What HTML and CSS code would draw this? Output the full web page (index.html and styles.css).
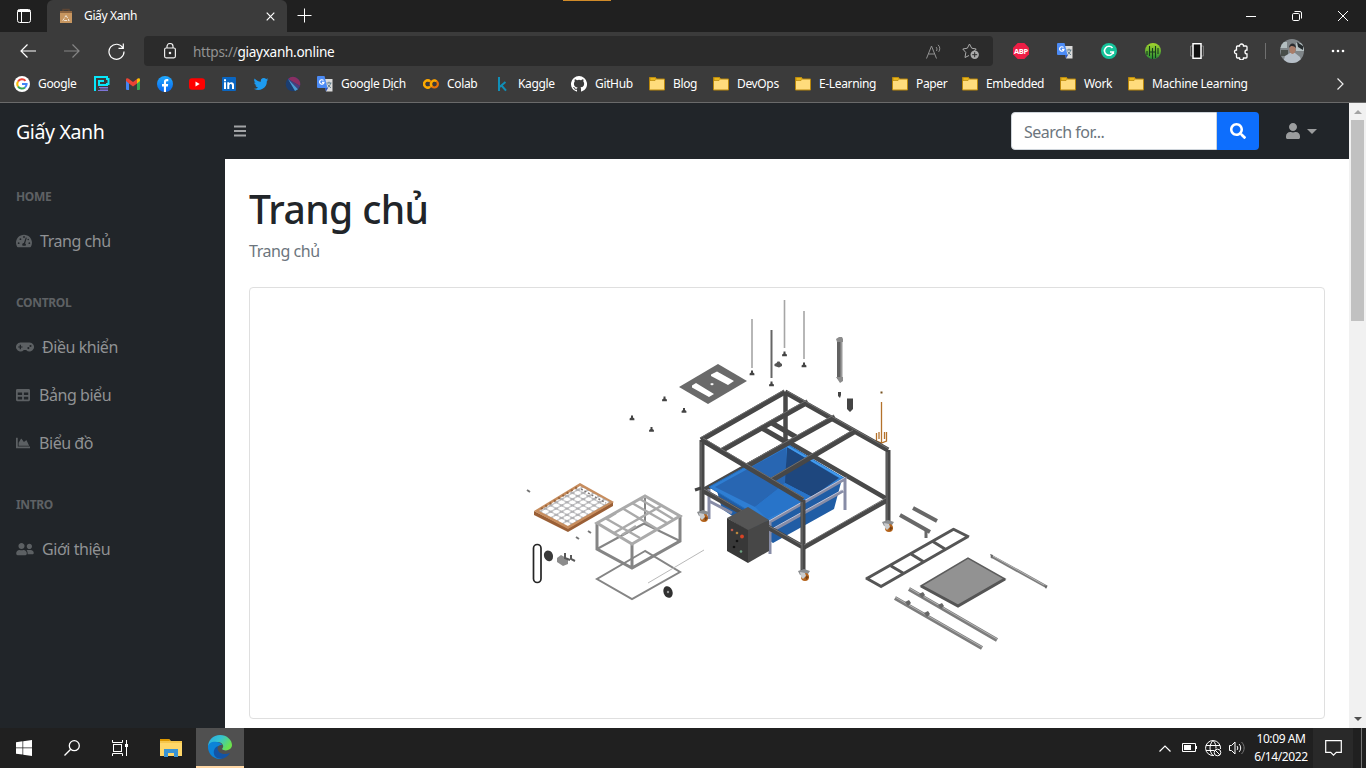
FILE: index.html
```html
<!DOCTYPE html>
<html lang="vi">
<head>
<meta charset="utf-8">
<title>Giấy Xanh</title>
<link rel="stylesheet" href="styles.css">
</head>
<body>
<svg class="defs" width="0" height="0">
  <defs>
    <symbol id="folder" viewBox="0 0 16 16"><path d="M.5 2.500v-1h6l1 1.500h8v11h-15z" fill="#ffdc7c" stroke="#b8860b"/><path d="M1 1.500h5.300l.9 1.700L6 4.500H1z" fill="#e9b61c" stroke="#b8860b" stroke-width=".7"/></symbol>
    <symbol id="translate" viewBox="0 0 16 16"><path d="M7 3h8.500v12.500H9z" fill="#dcdcdc"/><path d="M9.500 7h5M12 5.700V7m1.700 0c-.5 2-1.900 4-3.500 5m.5-3.500c.8 1.500 2 2.500 3.300 3.300" fill="none" stroke="#607d8b"/><path d="M1 0h6.500l3 12H1a1 1 0 0 1-1-1V1a1 1 0 0 1 1-1z" fill="#4c8bf5"/><path d="M8 12h3l-2 3.500z" fill="#3057c0"/><path d="M6.500 4.500A2.200 2.200 0 1 0 7 6.300H5" fill="none" stroke="#fff" stroke-width="1.200"/></symbol>
    <symbol id="caster" viewBox="0 0 14 14"><path d="M1 3l6-2 6 2-2 3-8 1z" fill="#8a8d90"/><circle cx="8" cy="9" r="4" fill="#b5651d"/><path d="M8 7l4 2-3 3z" fill="#7d4212"/><path d="M3 4l5 1 1 3-3 3-2-2z" fill="#c9cbcd"/></symbol>
    <symbol id="foot" viewBox="0 0 6 6"><path d="M2 .5h2v2l1.400 1v1.700H.6V3.500L2 2.500z" fill="#444"/></symbol>
    <pattern id="holes" width="6" height="6" patternUnits="userSpaceOnUse" patternTransform="matrix(.9 -.52 .9 .52 0 0)"><rect width="6" height="6" fill="#b0b0b3"/><circle cx="3" cy="3" r="2.600" fill="#fff"/></pattern>
    <linearGradient id="edgeA" x1="0" y1="0" x2="1" y2=".5"><stop stop-color="#28a9e5"/><stop offset=".5" stop-color="#35c3d0"/><stop offset="1" stop-color="#6be24c"/></linearGradient>
    <linearGradient id="bolt" x1="0" y1="0" x2="0" y2="1"><stop stop-color="#a4d52c"/><stop offset="1" stop-color="#278c36"/></linearGradient>
    <linearGradient id="fb" x1="0" y1="0" x2="0" y2="1"><stop stop-color="#20aaff"/><stop offset="1" stop-color="#0866ee"/></linearGradient>
  </defs>
</svg>
<div class="desktop">
  <header class="tabstrip">
    <div class="tab-menu"><svg width="16" height="16" viewBox="0 0 16 16" fill="none" stroke="#fff"><rect x="1.500" y="1.500" width="13" height="13" rx="2"/><path d="M2 3h12" stroke-width="2"/><path d="M5.500 4v10.500"/></svg></div>
    <div class="tab">
      <svg width="14" height="16" viewBox="0 0 14 16"><path d="M4 4V1.500h6V4" fill="none" stroke="#5d4634" stroke-width="1.500"/><path d="M1 3h12v12H1z" fill="#c79660"/><path d="M1 3h12v2H1z" fill="#8d6540"/><path d="M7 7.500l3.200 5H3.800z" fill="none" stroke="#efe4d6" stroke-dasharray="3 1"/></svg>
      <span class="tab-title">Giấy Xanh</span>
      <svg width="9" height="9" viewBox="0 0 9 9" stroke="#fff" stroke-width="1.200"><path d="M.7.7l7.600 7.600M8.300.7L.7 8.300"/></svg>
    </div>
    <svg class="new-tab" width="15" height="15" viewBox="0 0 15 15" stroke="#fff"><path d="M7.500.5v14M.5 7.500h14"/></svg>
    <div class="accent"></div>
    <div class="window-controls">
      <span><svg width="10" height="10" stroke="#fff"><path d="M0 5.500h10"/></svg></span>
      <span><svg width="10" height="10" viewBox="0 0 10 10" fill="none" stroke="#fff"><rect x=".5" y="2.500" width="7" height="7" rx="1.200"/><path d="M2.500.5H8A1.500 1.500 0 0 1 9.500 2v5.500"/></svg></span>
      <span><svg width="10" height="10" viewBox="0 0 10 10" stroke="#fff"><path d="M0 0l10 10M10 0L0 10"/></svg></span>
    </div>
  </header>
  <div class="toolbar">
    <div class="nav-buttons">
      <span><svg width="16" height="14" viewBox="0 0 16 14" fill="none" stroke="#fff" stroke-width="1.200"><path d="M16 7H1M7.500.5L1 7l6.500 6.500"/></svg></span>
      <span><svg width="16" height="14" viewBox="0 0 16 14" fill="none" stroke="#858585" stroke-width="1.200"><path d="M0 7h15M8.500.5L15 7l-6.500 6.500"/></svg></span>
      <span><svg width="17" height="17" viewBox="0 0 17 17" fill="none" stroke="#fff" stroke-width="1.200"><path d="M15 5A7.500 7.500 0 1 0 16 8.500M15.300.5v4.800h-4.800"/></svg></span>
    </div>
    <div class="address">
      <svg width="12" height="16" viewBox="0 0 12 16" fill="none" stroke="#eee" stroke-width="1.200"><rect x=".6" y="5" width="10.800" height="9.800" rx="1.500"/><path d="M3 5V3.500a3 3 0 0 1 6 0V5"/><circle cx="6" cy="10" r=".7" fill="#fff"/></svg>
      <span class="url"><span>https://</span>giayxanh.online</span>
      <svg class="read" width="17" height="15" viewBox="0 0 17 15" fill="none" stroke="#929292"><path d="M.5 14.500L5.500 2l5 12.500M2.500 10h6M10 3c1.200 1 1.200 2.700.5 4M12 .8c2.200 1.800 2.200 5 .7 7"/></svg>
      <svg width="18" height="17" viewBox="0 0 18 17" fill="none" stroke="#aaa"><path d="M7 12.500l-4 2 .8-5L.8 6l4.500-.8L7.500 1l2.200 4.200 4.500.8-2 2.200"/><circle cx="12.700" cy="11.700" r="4.200" fill="#aaa" stroke="none"/><path d="M10.200 11.700h5M12.700 9.200v5" stroke="#2b2b2b"/></svg>
    </div>
    <div class="extensions">
      <span><svg width="16" height="16" viewBox="0 0 16 16"><path d="M4.700 0h6.600L16 4.700v6.600L11.300 16H4.700L0 11.300V4.700z" fill="#ed1e45"/><text x="8" y="10.800" text-anchor="middle" class="abp">ABP</text></svg></span>
      <span><svg width="16" height="16"><use href="#translate"/></svg></span>
      <span><svg width="16" height="16" viewBox="0 0 16 16"><circle cx="8" cy="8" r="8" fill="#15c39a"/><path d="M11.500 5A4.500 4.500 0 1 0 12.300 9H9M12.300 9v2" fill="none" stroke="#fff" stroke-width="1.600"/></svg></span>
      <span><svg width="16" height="16" viewBox="0 0 16 16"><circle cx="8" cy="8" r="8" fill="url(#bolt)"/><path d="M4.500 3v10M7.500 5v11M10.500 3v12M2 8v4M13 5v6M5 9h2M8 9h2" stroke="#16391e" stroke-width="1.100"/></svg></span>
      <span><svg width="14" height="16" viewBox="0 0 14 16"><path d="M3 3H.5v10H3m8-10h2.500v10H11" fill="none" stroke="#777"/><rect x="3" y=".7" width="8" height="14.600" fill="#111" stroke="#fff" stroke-width="1.500"/></svg></span>
      <span><svg width="16" height="17" viewBox="0 0 16 17" fill="none" stroke="#fff" stroke-width="1.300"><path d="M4.500 3h2a2 2 0 0 1 4 0H13a1 1 0 0 1 1 1v3a2 2 0 0 0 0 4v3a1 1 0 0 1-1 1h-2.500a2 2 0 0 1-4 0h-2a1 1 0 0 1-1-1v-3a2 2 0 0 1 0-4V4a1 1 0 0 1 1-1z"/></svg></span>
    </div>
    <div class="divider"></div>
    <svg class="avatar" width="24" height="24" viewBox="0 0 24 24"><clipPath id="round"><circle cx="12" cy="12" r="12"/></clipPath><g clip-path="url(#round)"><path fill="#7f8588" d="M0 0h24v24H0z"/><path fill="#b4bfc1" d="M0 3h7v6H0zM16 4h8v8h-8z"/><path d="M17 3l6 4v4l-5-3z" fill="#252b2d"/><path d="M1 11h7v6H1z" fill="#484d49"/><path d="M3 24l2-7 5-3h5l5 4 2 6z" fill="#b7bfc8"/><ellipse cx="12.500" cy="10" rx="3.200" ry="5" fill="#aa7d69"/><path d="M9 9c0-6 7-6 7 0-2-2-5-3-7 0z" fill="#292b2e"/></g></svg>
    <svg class="more" width="14" height="4" fill="#fff"><circle cx="2" cy="2" r="1.300"/><circle cx="7" cy="2" r="1.300"/><circle cx="12" cy="2" r="1.300"/></svg>
  </div>
  <nav class="bookmarks">
    <a><svg width="16" height="16" viewBox="0 0 16 16"><circle cx="8" cy="8" r="8" fill="#fff"/><g fill="none" stroke-width="2"><path d="M4 5.500a4.700 4.700 0 0 1 7.500-.7" stroke="#ea4335"/><path d="M4 5.500a4.700 4.700 0 0 0 0 5" stroke="#fbbc05"/><path d="M4 10.500a4.700 4.700 0 0 0 7 .9" stroke="#34a853"/><path d="M11 11.400A4.600 4.600 0 0 0 12.600 8H8" stroke="#4285f4"/></g></svg>Google</a>
    <a><svg width="16" height="16" viewBox="0 0 16 16" fill="none"><path d="M1 15V1h12v2h1.500v5H13v1H5V5h5" stroke="#08e7fa" stroke-width="2"/><path d="M5 11.500h9M4 14.500h10M6 13h8" stroke="#7d75d8" stroke-width="1.200"/></svg></a>
    <a><svg width="16" height="16" viewBox="0 0 16 16"><path d="M1 4l3 2v8H2a1 1 0 0 1-1-1z" fill="#4285f4"/><path d="M15 4l-3 2v8h2a1 1 0 0 0 1-1z" fill="#34a853"/><path d="M1 5V3.500C1 2 3 2 4 3l4 3 4-3v4.500L8 10.500 4 7.500z" fill="#ea4335"/><path d="M12 3c1-1 3-1 3 .5V5l-3 2.500z" fill="#fbbc04"/></svg></a>
    <a><svg width="16" height="16" viewBox="0 0 16 16"><circle cx="8" cy="8" r="8" fill="url(#fb)"/><path d="M6.900 16v-5.500H5V8h1.900V6.300C6.900 4 8 3 10 3l1.300.1v2.100h-1c-1 0-1.300.5-1.300 1.200V8h2.200l-.4 2.500H9V16z" fill="#fff"/></svg></a>
    <a><svg width="16" height="16" viewBox="0 0 16 16"><rect y="2.200" width="16" height="11.600" rx="3" fill="#f00"/><path d="M6.500 5.500v5l4.200-2.500z" fill="#fff"/></svg></a>
    <a><svg width="16" height="16" viewBox="0 0 16 16"><rect x="1" y="1" width="14" height="14" rx="1" fill="#0a66c2"/><path d="M3 6.300h2V13H3zM3 3.200h2v2H3zM6.300 6.300h2v1c1.200-1.900 4.700-1.500 4.700 1.500V13h-2V9.500c0-2.200-2.700-2-2.700 0V13h-2z" fill="#fff"/></svg></a>
    <a><svg width="16" height="16" viewBox="-1 -1 26 26"><path d="M23.900 4.600c-.9.400-1.800.7-2.800.8a5 5 0 0 0 2.200-2.700c-1 .6-2 1-3.100 1.200a4.900 4.900 0 0 0-8.400 4.500C7.700 8.200 4.100 6.200 1.700 3.200a4.900 4.900 0 0 0 1.500 6.600c-.8 0-1.600-.2-2.200-.6a5 5 0 0 0 3.900 4.900c-.7.200-1.500.2-2.200.1.600 2 2.400 3.400 4.600 3.400A9.900 9.900 0 0 1 0 19.500 14 14 0 0 0 21.500 7c1-.7 1.800-1.500 2.400-2.400z" fill="#1d9bf0"/></svg></a>
    <a><svg width="16" height="16" viewBox="0 0 16 16"><circle cx="8" cy="8" r="7.300" fill="#1b3d70"/><path d="M3 3a7.300 7.300 0 0 1 8-1.600 7.300 7.300 0 0 1 4 8.600z" fill="#8a2f62"/><path d="M3 3l12 7-2 3.300z" fill="#49407c"/><path d="M3 3l10 10.300-3 1.700z" fill="#4b9bd0"/></svg></a>
    <a><svg width="16" height="16"><use href="#translate"/></svg>Google Dịch</a>
    <a><svg width="16" height="16" viewBox="0 0 16 16" fill="none" stroke-width="2.200"><circle cx="4.700" cy="8" r="3.600" stroke="#e8710a"/><circle cx="11.400" cy="8" r="3.500" stroke="#e8710a"/><path d="M7 5.200A3.600 3.600 0 1 0 7 10.800M8.900 10.500a3.500 3.500 0 0 1 4.500-5.300" stroke="#f9ab00"/></svg>Colab</a>
    <a class="kaggle"><svg width="16" height="16" viewBox="0 0 16 16" fill="none" stroke="#108fb8" stroke-width="2"><path d="M4 1v14M10.500 6l-6 5M6.500 9.500l4.500 5.200"/></svg>Kaggle</a>
    <a><svg width="16" height="16" viewBox="0 0 16 16"><path fill="#fff" d="M8 0a8 8 0 0 0-2.530 15.590c.4.070.55-.17.55-.38v-1.490c-2.010.37-2.530-.49-2.690-.94-.09-.23-.48-.94-.82-1.130-.28-.15-.68-.52-.01-.53.63-.01 1.080.58 1.230.82.720 1.210 1.870.87 2.330.66.070-.52.280-.87.510-1.070-1.780-.2-3.640-.89-3.640-3.950 0-.87.310-1.590.82-2.150-.08-.2-.36-1.020.08-2.120 0 0 .67-.21 2.200.82a7.600 7.600 0 0 1 4 0c1.530-1.040 2.200-.82 2.200-.82.44 1.100.16 1.920.08 2.120.51.56.82 1.270.82 2.150 0 3.070-1.870 3.750-3.650 3.950.29.250.54.730.54 1.480v2.200c0 .21.150.46.550.38A8 8 0 0 0 8 0z"/></svg>GitHub</a>
    <a><svg width="16" height="16"><use href="#folder"/></svg>Blog</a>
    <a><svg width="16" height="16"><use href="#folder"/></svg>DevOps</a>
    <a><svg width="16" height="16"><use href="#folder"/></svg>E-Learning</a>
    <a><svg width="16" height="16"><use href="#folder"/></svg>Paper</a>
    <a><svg width="16" height="16"><use href="#folder"/></svg>Embedded</a>
    <a><svg width="16" height="16"><use href="#folder"/></svg>Work</a>
    <a><svg width="16" height="16"><use href="#folder"/></svg>Machine Learning</a>
    <svg width="7" height="12" fill="none" stroke="#eee" stroke-width="1.200"><path d="M.5.5L6 6 .5 11.500"/></svg>
  </nav>

  <div class="page">
    <aside class="sidebar">
      <div class="brand">Giấy Xanh</div>
      <h6>HOME</h6>
      <a><svg width="16" height="14" viewBox="0 32 576 448"><path d="M288 32C129 32 0 161 0 320c0 52.800 14.300 102.300 39 144.800 5.600 9.600 16.300 15.200 27.500 15.200h443c11.100 0 21.800-5.600 27.400-15.200C561.800 422.300 576 372.800 576 320c0-159-129-288-288-288z"/><g fill="#212529"><circle cx="288" cy="112" r="32"/><circle cx="96" cy="336" r="32"/><circle cx="160" cy="192" r="32"/><circle cx="480" cy="336" r="32"/><circle cx="440" cy="200" r="28"/><path d="M352 130l38 13-62 200c37 22 40 55 12 82H236c-30-48 2-94 48-96z"/></g></svg><span>Trang chủ</span></a>
      <h6>CONTROL</h6>
      <a><svg width="18" height="14" viewBox="0 32 640 448"><path d="M480 96H160a160 160 0 1 0 119 267h82A160 160 0 1 0 480 96z"/><path d="M132 180h44v55h54v42h-54v55h-44v-55H78v-42h54z" fill="#212529"/><circle cx="440" cy="295" r="38" fill="#212529"/><circle cx="515" cy="220" r="38" fill="#212529"/></svg><span>Điều khiển</span></a>
      <a><svg width="14" height="14" viewBox="0 0 512 512"><path fill-rule="evenodd" d="M464 32H48C21 32 0 53 0 80v352c0 27 21 48 48 48h416c27 0 48-21 48-48V80c0-27-21-48-48-48zM224 416H64v-96h160zm0-160H64v-96h160zm224 160H288v-96h160zm0-160H288v-96h160z"/></svg><span class="nudge">Bảng biểu</span></a>
      <a><svg width="14" height="14" viewBox="0 0 512 512"><path d="M500 384c6.600 0 12 5.400 12 12v40c0 6.600-5.400 12-12 12H12c-6.600 0-12-5.400-12-12V76c0-6.600 5.400-12 12-12h40c6.600 0 12 5.400 12 12v308zM372.700 159.500L288 216l-85.300-113.700c-5.100-6.800-15.500-6.300-19.900 1L96 248v104h384l-89.900-187.800c-3.200-6.500-11.400-8.700-17.400-4.700z"/></svg><span class="nudge">Biểu đồ</span></a>
      <h6>INTRO</h6>
      <a><svg width="18" height="14" viewBox="0 0 640 512"><path d="M192 256c61.900 0 112-50.100 112-112S253.900 32 192 32 80 82.100 80 144s50.100 112 112 112zm76.800 32h-8.300c-20.800 10-43.900 16-68.500 16s-47.600-6-68.500-16h-8.300C51.600 288 0 339.600 0 403.200V432c0 26.500 21.500 48 48 48h288c26.500 0 48-21.500 48-48v-28.800c0-63.600-51.600-115.200-115.200-115.200zM480 256c53 0 96-43 96-96s-43-96-96-96-96 43-96 96 43 96 96 96zm48 32h-3.800c-13.900 4.800-28.600 8-44.200 8s-30.300-3.200-44.200-8H432c-20.400 0-39.200 5.900-55.700 15.400 24.400 26.300 39.700 61.200 39.700 99.800v38.400c0 2.200-.5 4.300-.6 6.400H592c26.500 0 48-21.500 48-48 0-61.900-50.100-112-112-112z"/></svg><span>Giới thiệu</span></a>
    </aside>
    <div class="content">
      <div class="topnav">
        <svg width="12" height="12" stroke="#a2a4a6" stroke-width="2"><path d="M0 1.500h12M0 6h12M0 10.500h12"/></svg>
        <div class="search"><div class="field">Search for...</div><button><svg width="16" height="16" viewBox="0 0 512 512" fill="#fff"><path d="M505 442.700L405.300 343c-4.500-4.500-10.600-7-17-7H372c27.600-35.300 44-79.700 44-128C416 93.100 322.900 0 208 0S0 93.100 0 208s93.100 208 208 208c48.300 0 92.700-16.400 128-44v16.300c0 6.400 2.500 12.500 7 17l99.700 99.700c9.400 9.400 24.600 9.400 33.900 0l28.300-28.300c9.400-9.400 9.400-24.600.1-34zM208 336c-70.700 0-128-57.200-128-128 0-70.700 57.200-128 128-128 70.700 0 128 57.200 128 128 0 70.700-57.200 128-128 128z"/></svg></button></div>
        <svg width="14" height="16" viewBox="0 0 448 512" fill="#9b9d9e"><path d="M224 256c70.700 0 128-57.300 128-128S294.700 0 224 0 96 57.300 96 128s57.300 128 128 128zm89.600 32h-16.700c-22.200 10.200-46.900 16-72.900 16s-50.600-5.800-72.900-16h-16.700C60.200 288 0 348.200 0 422.400V464c0 26.500 21.500 48 48 48h352c26.500 0 48-21.500 48-48v-41.600c0-74.200-60.200-134.400-134.400-134.400z"/></svg>
        <i class="caret"></i>
      </div>
      <main>
        <h1>Trang chủ</h1>
        <div class="breadcrumb">Trang chủ</div>
        <div class="card">
          <svg width="1074" height="430" viewBox="250 288 1074 430">
            <!-- threaded rods and feet -->
            <g stroke="#a6a6a6" stroke-width="1.600"><path d="M752 319v49M784.500 300v48M804 311v48"/><path d="M771.500 330v48" stroke="#666" stroke-width="2"/></g>
            <g><use href="#foot" x="749" y="370" width="6" height="6"/><use href="#foot" x="781.500" y="351" width="6" height="6"/><use href="#foot" x="801" y="362" width="6" height="6"/><use href="#foot" x="768.500" y="381" width="6" height="6"/><use href="#foot" x="629" y="415" width="6" height="6"/><use href="#foot" x="648.500" y="426.500" width="6" height="6"/><use href="#foot" x="661.500" y="396" width="6" height="6"/><use href="#foot" x="681" y="407.500" width="6" height="6"/></g>
            <path d="M774.500 364l2-1 1-1.500h2l1 1.500 1.500 1v2l-3 1.500-4.500-1.500z" fill="#555"/>
            <!-- mounting plate -->
            <path fill="#6a6a6a" d="M679 387l39-23 29 17-39 23z"/><path fill="#fff" d="M692 385.500l4-2.500 18 11-5 3-17-9.500zM711 374.500l6-3 17 9.500-6 4-17-9zM710 384l2-1 2 1-2 1.500z"/>
            <!-- actuator, motor and stirrer -->
            <path d="M839 340v39" stroke="#626262" stroke-width="4"/><path d="M841.500 340v39" stroke="#999" stroke-width="2"/><path d="M836 339l3-2h3l1 2v3h-6zM836 377h7v4l-3 2z" fill="#8b8b8b"/><path d="M838 392h3v3l-1 3-2-2zM847 398.500h6V409l-3 3-3-3z" fill="#444"/>
            <g fill="none" stroke="#b4722b" stroke-width="1.300"><path d="M881.500 402v41M876.500 433v8l5 2 5-2v-9M879 432v7M884.500 432v7"/><path d="M880.500 392.500h2" stroke="#76501e" stroke-width="2"/></g>
            <!-- rear frame -->
            <g fill="none" stroke="#494949" stroke-width="4.500"><path d="M785.500 392v52l-82 46M785 440l102 59M886 501l-83 47"/></g>
            <!-- tub -->
            <path fill="#205da5" d="M717 491l51 30 74-42-8 30-61 34-20-13-31-21z"/>
            <path fill="#2e7ed3" stroke="#246dbb" d="M709 487l78-43 57 34-77 44z"/>
            <path fill="#2866b2" d="M715 487l71-39v35l-31 24z"/>
            <path fill="#1e477e" d="M787 447l52 31-27 19-27-14z"/>
            <path fill="#2874c9" d="M785 483l27 14-45 22-12-12z"/>
            <path d="M787 446l55 32" stroke="#429bee" stroke-width="2"/>
            <g fill="none" stroke="#878ca6" stroke-width="3"><path d="M709 489v30M709 493l20 11M709 501l23 12M768 523l77-44v31M770 532l73-41M770 523v31"/><path d="M769 521l75-43M770 530l72-40" stroke="#c0c4d7" stroke-width="1"/></g>
            <!-- front frame -->
            <g fill="none" stroke="#474747" stroke-width="5"><path d="M702 440v72M702 490l101 57M803 500v71M888 450v72M701 440l84-48M785 392l103 58M702 440l101 60M721 451l87-49M747 466l88-49M772 480l82-48M760 427l26 15M770 422l26 15"/></g>
            <g fill="none" stroke="#707070" stroke-width="1"><path d="M700 438l84-48M787 391l102 58M703 438l101 60M720 449l87-49M746 464l88-49M771 478l82-48M701 442v68M802 502v67M887 452v69M704 489l98 56M804 545l82-47"/></g>
            <path d="M695 490l6-2" stroke="#444" stroke-width="3"/>
            <!-- control box -->
            <path fill="#555" d="M727 518l21-11 21 13-21 11z"/><path fill="#383838" d="M727 518l21 12v33l-21-12z"/><path fill="#474747" d="M748 530l21-10v31l-21 12z"/>
            <g><circle cx="732" cy="530" r="1.300" fill="#c25b4a"/><circle cx="737" cy="533" r="1.300" fill="#b9863d"/><circle cx="742" cy="536.500" r="1.900" fill="#d74325"/><circle cx="737" cy="541" r="1.300" fill="#111"/><circle cx="734" cy="547" r="1.300" fill="#111"/><circle cx="741" cy="551.500" r="1.300" fill="#6b9e7f"/></g>
            <use href="#caster" x="696" y="509" width="14" height="14"/><use href="#caster" x="881" y="519" width="14" height="14"/><use href="#caster" x="797" y="568" width="14" height="14"/>
            <!-- sieve tray -->
            <path fill="#9a5f36" d="M534 511l34 17 45-26v4l-45 26-34-17z"/><path fill="#c78d5e" d="M534 511l46-28 34 19-46 27z"/><path fill="url(#holes)" d="M539 511l41-25 30 16-42 24z"/><path d="M541 509l38-23" stroke="#98663e" stroke-width="2" stroke-dasharray="2 3"/><path d="M581 489l25 14" stroke="#7d7777" stroke-width="1.500" stroke-dasharray="2 2"/>
            <!-- inner rack -->
            <g fill="none" stroke="#858585" stroke-width="3"><path d="M597 523v26l35 19 48-27v-26M632 544v24"/><path d="M645 498v26l35 17M597 549l48-26" stroke-width="2"/></g>
            <g fill="none" stroke="#aaa" stroke-width="3"><path d="M597 523l48-27 35 20-48 28z"/><path d="M605 518l35 20M622 508l35 21M632 503l35 20M640 499l33 20M614 533l47-27M608 518l8-5M622 535l14-9" stroke-width="2.400"/></g>
            <path fill="none" stroke="#858585" stroke-width="2" d="M645 551l-48 28 35 20 48-27z"/><path d="M648 583l56-33" stroke="#b9b9b9"/>
            <!-- belt, pulleys and motor -->
            <rect x="533.500" y="544.500" width="7.500" height="38" rx="3.700" fill="none" stroke="#252525" stroke-width="1.700"/><ellipse cx="548.500" cy="556" rx="4.500" ry="5.500" fill="#3a3a3a" transform="rotate(-20 548 556)"/><path fill="#8c8c8c" d="M557 558l4-3 7 4v5l-5 2-6-4z"/><path d="M565 553v5l5 2M571 555v4l4 2" fill="none" stroke="#595959" stroke-width="2"/><ellipse cx="668" cy="592" rx="4.500" ry="6" fill="#303030" transform="rotate(-20 668 592)"/><circle cx="668" cy="592" r="1.200" fill="#999"/><path d="M527 490l3 2M576 537l3 2M588 531l3 2" stroke="#777" stroke-width="2"/>
            <!-- guides, ladder and base -->
            <g fill="none" stroke="#686868" stroke-width="4"><path d="M900 515l30 17M913 508l24 13"/><path d="M926 530v8" stroke-width="3"/></g>
            <g fill="none" stroke="#555" stroke-width="3"><path d="M866 579l88-50M881 586.500l87-50M866 578l16 9M953 529l16 8M891 566l12 7M911 554l13 8M932 541l13 8"/></g>
            <path fill="#929292" stroke="#5c5c5c" stroke-width="1.500" d="M921 586l47-28 37 21-47 27z"/><path d="M921 586l37 20 47-27" fill="none" stroke="#555" stroke-width="3"/>
            <g fill="none" stroke="#7d7d7d" stroke-width="4"><path d="M895 598l87 50M909 589l88 51"/><path d="M991 556l56 31" stroke-width="3"/></g><g stroke="#b5b5b5" stroke-width="1"><path d="M895 597l87 50M909 588l88 51M991 555l55 31"/></g><path d="M905 602l4-2 2 3-3 3zM924 613l4-2 2 3-3 3zM919 594l4-2 2 3-3 3zM938 605l4-2 2 3-3 3zM990 554l3 1-1 4zM1044 585l3 1-1 3z" fill="#666"/>
          </svg>
        </div>
      </main>
    </div>
    <div class="scrollbar"><i class="up"></i><div class="thumb"></div><i class="down"></i></div>
  </div>

  <footer class="taskbar">
    <span><svg width="16" height="16" viewBox="0 0 16 16" fill="#fff"><path d="M0 2.300l6.500-1v6.200H0zM7.200 1.200L16 0v7.500H7.200zM0 8.300h6.500v6.200L0 13.700zM7.200 8.300H16V16l-8.800-1.300z"/></svg></span>
    <span><svg width="16" height="16" viewBox="0 0 16 16" fill="none" stroke="#fff" stroke-width="1.300"><circle cx="10.300" cy="5.700" r="5"/><path d="M6.700 9.300L.5 15.500"/></svg></span>
    <span><svg width="17" height="16" viewBox="0 0 17 16" fill="none" stroke="#fff"><path d="M.5 0v2.500h10V0M.5 16v-2.500h10V16M14.500 0v16"/><rect x="1.500" y="4.500" width="8" height="7"/><rect x="13.500" y="4.500" width="2" height="2" fill="#fff"/></svg></span>
    <span class="explorer"><svg width="22" height="18" viewBox="0 0 22 18"><path d="M0 0h9l2 2h11v15H0z" fill="#f6c64c"/><path d="M0 0h9l1 2H0z" fill="#dd9800"/><path d="M0 4h22v13H0z" fill="#ffd769"/><path d="M4 18v-8h14v8h-4v-4H8v4z" fill="#3a94d4"/></svg></span>
    <span class="edge"><svg width="24" height="24" viewBox="0 0 24 24"><path d="M0 12C0 5 5 0 12 0s12 5 12 10-7 7-10 4c3-3 0-7-4-7-5 0-9 3-10 7z" fill="url(#edgeA)"/><path d="M0 11c1-4 6-5 9-4 2 0 4 1 5 3-6-1-9 9 0 14C6 25 0 19 0 12z" fill="#0c83d8"/><path d="M10 11c-2 6 4 10 12 7-3 5-9 7-13 5-5-3-4-10 1-12z" fill="#1354a5"/></svg></span>
    <div class="tray">
      <span><svg width="12" height="7" fill="none" stroke="#fff" stroke-width="1.200"><path d="M.5 6.500L6 1l5.500 5.500"/></svg></span>
      <span><svg width="15" height="10" viewBox="0 0 15 10"><path d="M.5.5h13v8H.5z" fill="none" stroke="#fff"/><path d="M2 2h7v5H2zM14 3h1v3h-1z" fill="#fff"/></svg></span>
      <span><svg width="17" height="17" viewBox="0 0 17 17" fill="none" stroke="#fff"><path d="M9 15.500A7.500 7.500 0 1 1 15.500 9M1 5.500h14M1 10.500h8M8 .5c-4 4-4 11 0 15M8 .5c2.500 2.500 3 5 3 8"/><circle cx="12.500" cy="12.500" r="3.300"/><path d="M10 10l5 5"/></svg></span>
      <span><svg width="17" height="14" viewBox="0 0 17 14" fill="none" stroke="#fff"><path d="M.5 4.500h2L6 1v12L2.500 9.500h-2zM8 5c1 1 1 3 0 4M10 3c2.200 2 2.200 6 0 8"/><path d="M12.500 1c3.500 3.500 3.500 8.500 0 12" stroke="#777"/></svg></span>
    </div>
    <div class="clock"><span>10:09 AM</span><span>6/14/2022</span></div>
    <div class="notice"><svg width="17" height="16" viewBox="0 0 17 16" fill="none" stroke="#fff" stroke-width="1.200"><path d="M.7.7h15.600v11.600h-5l-2.800 2.800-2.800-2.800h-5z"/></svg></div>
    <div class="peek"></div>
  </footer>
</div>
</body>
</html>
```
FILE: styles.css
```css
* { box-sizing: border-box; }
body { margin: 0; overflow: hidden; font-family: "Noto Sans", "Open Sans", sans-serif; }
svg { display: block; flex: none; }
.defs { position: absolute; }
.desktop { display: flex; flex-direction: column; width: 1366px; height: 768px; overflow: hidden; }

.tabstrip { display: flex; height: 32px; background: #202020; }
.tab-menu { width: 47px; padding: 8px 0 0 16px; }
.tab { display: flex; align-items: center; width: 240px; padding: 0 12px; background: #3b3b3b; border-radius: 6px 6px 0 0; }
.tab-title { flex: 1; padding-left: 11px; font-size: 12px; line-height: 16px; letter-spacing: -.36px; color: #fff; }
.new-tab { margin: 8px 0 0 10px; }
.accent { width: 48px; height: 1px; margin-left: 251px; background: #d18b29; }
.window-controls { display: flex; margin-left: auto; }
.window-controls span { display: grid; place-items: center; width: 46px; }

.toolbar { display: flex; align-items: center; height: 38px; background: #3b3b3b; }
.nav-buttons { display: flex; width: 144px; padding-left: 6px; }
.nav-buttons span { display: grid; place-items: center; width: 44px; }
.address { display: flex; align-items: center; width: 849px; height: 30px; padding: 0 13px 0 20px; background: #2b2b2b; border-radius: 4px; }
.url { flex: 1; padding-left: 17px; color: #fff; font-size: 13.6px; letter-spacing: -.3px; }
.url span { color: #929292; }
.read { margin-right: 19px; }
.extensions { display: flex; margin-left: 6px; }
.extensions span { display: grid; place-items: center; width: 44px; height: 30px; }
.abp { font: bold 7.5px "Open Sans", sans-serif; letter-spacing: -.3px; fill: #fff; }
.divider { width: 1px; height: 16px; margin-left: 2px; background: #707070; }
.avatar { margin-left: 14px; }
.more { margin-left: 27px; }

.bookmarks { display: grid; grid-template-columns: 80px 31px repeat(6, 32px) 106px 72px 76px 78px 64px 82px 97px 70px 98px 68px 209px 7px; align-items: center; height: 33px; padding: 0 0 5px 14px; background: #3b3b3b; border-bottom: 1px solid #6a6a6a; }
.bookmarks a { display: flex; align-items: center; gap: 8px; color: #fff; font-size: 12px; line-height: 16px; letter-spacing: -.35px; white-space: nowrap; }
.bookmarks .kaggle { gap: 7px; }

.page { display: flex; height: 625px; }
.sidebar { width: 225px; padding: 0 16px; background: #212529; }
.brand { height: 56px; color: #fff; font-size: 19.6px; line-height: 58px; letter-spacing: -.4px; }
.sidebar h6 { margin: 0; padding: 28px 0 12px; height: 58px; color: #5e6164; font-size: 12px; line-height: 19px; font-weight: 700; letter-spacing: -.35px; }
.sidebar a { display: flex; align-items: center; gap: 8px; height: 48px; color: #909294; font-size: 16px; letter-spacing: -.45px; }
.nudge { margin-left: 1px; }
.sidebar a svg { fill: #5c6063; }
.content { display: flex; flex-direction: column; width: 1124px; background: #fff; }
.topnav { display: flex; align-items: center; height: 56px; flex: none; padding: 0 32px 0 9px; background: #212529; }
.search { display: flex; width: 248px; height: 38px; margin: 0 27px 0 auto; }
.field { width: 206px; padding-left: 12px; background: #fff; border: 1px solid #ced4da; border-radius: 4px 0 0 4px; color: #6c757d; font-size: 16px; letter-spacing: -.5px; line-height: 38px; }
.search button { display: grid; place-items: center; width: 42px; padding: 0; border: 0; background: #0d6efd; border-radius: 0 4px 4px 0; }
.caret { margin-left: 7px; border: 5px solid transparent; border-top-color: #9b9d9e; border-bottom: 0; }
main { padding: 0 24px; }
h1 { height: 48px; margin: 24px 0 8px; color: #212529; font-size: 39px; letter-spacing: -.6px; line-height: 51px; font-weight: 500; }
.breadcrumb { height: 24px; margin-bottom: 24px; color: #6c757d; font-size: 16px; letter-spacing: -.45px; line-height: 25px; }
.card { width: 1076px; height: 432px; border: 1px solid #dfdfdf; border-radius: 4px; }
.scrollbar { display: flex; flex-direction: column; align-items: center; justify-content: space-between; width: 17px; padding: 7px 0; background: #f1f1f1; }
.up { border: 4px solid transparent; border-bottom-color: #a3a3a3; border-top: 0; }
.thumb { width: 13px; height: 201px; margin: 6px 0 auto; background: #c1c1c1; }
.down { border: 4px solid transparent; border-top-color: #505050; border-bottom: 0; }

.taskbar { display: flex; height: 40px; background: #202020; }
.taskbar > span { display: grid; place-items: center; width: 48px; }
.taskbar > .explorer { margin-left: 3px; }
.taskbar > .edge { margin-left: 1px; background: #505050; border-bottom: 2px solid #ffd7a5; }
.tray { display: flex; margin-left: auto; }
.tray span { display: grid; place-items: center; width: 24px; }
.clock { display: flex; flex-direction: column; align-items: center; width: 64px; padding-top: 2px; color: #fff; font-size: 12px; letter-spacing: -.4px; line-height: 18px; }
.notice { display: grid; place-items: center; width: 40px; background: #292929; }
.peek { width: 9px; margin-right: 4px; border-right: 1px solid #757575; }
```
